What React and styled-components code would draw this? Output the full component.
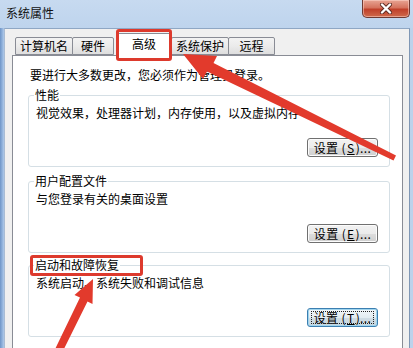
import React from "react";
import styled, { createGlobalStyle } from "styled-components";

const Global = createGlobalStyle`
  html, body { margin: 0; padding: 0; background: #c6d9ef; }
  body { font-family: "Noto Sans CJK SC", "Liberation Sans", sans-serif; font-size: 12px; color: #000; }
`;

const Window = styled.div`
  position: relative;
  width: 413px;
  height: 348px;
  overflow: hidden;
  display: flex;
  flex-direction: column;
  background: linear-gradient(90deg, #6f95c8 0px, #9dbce2 3px, #c4d8ef 5px, #c9dbef 70%, #bcd2eb 100%);
`;

const TitleBar = styled.div`
  height: 28px;
  flex: none;
  display: flex;
  align-items: flex-start;
  padding-left: 6px;
  padding-right: 3px;
  background: linear-gradient(180deg, #c7daf0 0%, #bed4ed 100%);
`;

const Title = styled.div`
  font-size: 12px;
  line-height: 16px;
  margin-top: 5px;
  color: #111;
`;

const CloseButton = styled.div`
  margin-left: auto;
  width: 46px;
  height: 17px;
  border: 1px solid #6e3a33;
  border-top: none;
  border-radius: 0 0 5px 5px;
  background: linear-gradient(180deg, #e8a594 0%, #d5735e 45%, #c0402a 55%, #cf6a4c 100%);
  display: flex;
  align-items: center;
  justify-content: center;
  box-shadow: inset 0 0 0 1px rgba(255, 220, 210, 0.5);
`;

const Client = styled.div`
  flex: 1;
  margin-left: 4px;
  margin-right: 3px;
  background: #f0f0f0;
  border-top: 1px solid #8fa7c4;
  border-left: 1px solid #a9bcd4;
  border-right: 1px solid #7f97b5;
  display: flex;
  flex-direction: column;
  padding: 4px 6px 0 7px;
`;

const TabRow = styled.div`
  display: flex;
  align-items: flex-end;
  height: 22px;
  padding-left: 3px;
  position: relative;
  z-index: 2;
`;

const Tab = styled.div`
  width: ${(p) => p.$w}px;
  margin-left: ${(p) => p.$ml || 0}px;
  height: ${(p) => (p.$active ? 23 : 18)}px;
  margin-bottom: ${(p) => (p.$active ? -1 : 0)}px;
  box-sizing: border-box;
  border: 1px solid #898c95;
  border-bottom: ${(p) => (p.$active ? "none" : "1px solid #898c95")};
  border-radius: 2px 2px 0 0;
  background: ${(p) =>
    p.$active ? "#ffffff" : "linear-gradient(180deg, #f3f3f3 0%, #ebebeb 50%, #dedede 100%)"};
  display: flex;
  justify-content: center;
  align-items: ${(p) => (p.$active ? "flex-start" : "center")};
  padding-top: ${(p) => (p.$active ? 2 : 0)}px;
  font-size: 12px;
  line-height: 16px;
  position: relative;
  z-index: ${(p) => (p.$active ? 3 : 1)};
`;

const Panel = styled.div`
  flex: 1;
  background: #fff;
  border: 1px solid #898c95;
  border-bottom: none;
  padding: 11px 12px 0 15px;
  display: flex;
  flex-direction: column;
`;

const Intro = styled.div`
  line-height: 16px;
  margin-left: 2px;
  margin-bottom: 4px;
`;

const Group = styled.fieldset`
  margin: 0 0 ${(p) => p.$mb || 0}px 0;
  padding: 0 11px 9px 5px;
  border: 1px solid #d5dfe5;
  border-radius: 3px;
  display: flex;
  flex-direction: column;
  min-width: 0;
`;

const Legend = styled.legend`
  padding: 0 1px;
  line-height: 16px;
  font-size: 12px;
`;

const Desc = styled.div`
  line-height: 16px;
  margin: 2px 0 0 2px;
`;

const Button = styled.div`
  align-self: flex-end;
  margin-top: 17px;
  width: 71px;
  height: 19px;
  box-sizing: border-box;
  border: 1px solid ${(p) => (p.$focus ? "#3c7fb1" : "#707070")};
  border-radius: 3px;
  background: ${(p) =>
    p.$focus
      ? "linear-gradient(180deg, #f2f7fa 0%, #e3ecf1 50%, #d0dde5 51%, #c6d5de 100%)"
      : "linear-gradient(180deg, #f2f2f2 0%, #ebebeb 50%, #dddddd 51%, #cfcfcf 100%)"};
  box-shadow: inset 0 0 0 1px ${(p) => (p.$focus ? "#9fd5ef" : "#fcfcfc")};
  display: flex;
  align-items: center;
  justify-content: center;
  position: relative;
  font-size: 12px;
  line-height: 14px;
  white-space: nowrap;
  letter-spacing: 0.4px;
  &::after {
    content: "";
    display: ${(p) => (p.$focus ? "block" : "none")};
    position: absolute;
    inset: 2px 3px;
    border: 1px dotted #222;
  }
`;

const Key = styled.span`
  text-decoration: underline;
  text-underline-offset: 1px;
  margin: 0 1px;
`;

const Highlight = styled.div`
  position: absolute;
  left: ${(p) => p.$x}px;
  top: ${(p) => p.$y}px;
  width: ${(p) => p.$w}px;
  height: ${(p) => p.$h}px;
  box-sizing: border-box;
  border: 3px solid #dd3a2d;
  border-radius: 3px;
  z-index: 10;
  pointer-events: none;
`;

const Overlay = styled.svg`
  position: absolute;
  left: 0;
  top: 0;
  z-index: 11;
  pointer-events: none;
`;

function SettingsButton({ k, focus }) {
  return (
    <Button $focus={focus}>
      设置 (<Key>{k}</Key>)...
    </Button>
  );
}

const tabs = [
  { label: "计算机名", w: 58 },
  { label: "硬件", w: 42, ml: -1 },
  { label: "高级", w: 54, ml: 3, active: true },
  { label: "系统保护", w: 58 },
  { label: "远程", w: 47, ml: -1 },
];

export default function App() {
  return (
    <>
      <Global />
      <Window>
        <TitleBar>
          <Title>系统属性</Title>
          <CloseButton>
            <svg width="14" height="11" viewBox="0 0 14 11">
              <path d="M3 1.5 L11 9.5 M11 1.5 L3 9.5" stroke="#5a2a22" strokeWidth="4" strokeLinecap="round" />
              <path d="M3 1.5 L11 9.5 M11 1.5 L3 9.5" stroke="#ffffff" strokeWidth="2.4" strokeLinecap="round" />
            </svg>
          </CloseButton>
        </TitleBar>
        <Client>
          <TabRow>
            {tabs.map((t) => (
              <Tab key={t.label} $w={t.w} $ml={t.ml} $active={t.active}>
                {t.label}
              </Tab>
            ))}
          </TabRow>
          <Panel>
            <Intro>要进行大多数更改，您必须作为管理员登录。</Intro>
            <Group $mb={6}>
              <Legend>性能</Legend>
              <Desc>视觉效果，处理器计划，内存使用，以及虚拟内存</Desc>
              <SettingsButton k="S" />
            </Group>
            <Group $mb={4}>
              <Legend>用户配置文件</Legend>
              <Desc>与您登录有关的桌面设置</Desc>
              <SettingsButton k="E" />
            </Group>
            <Group>
              <Legend>启动和故障恢复</Legend>
              <Desc>系统启动、系统失败和调试信息</Desc>
              <SettingsButton k="T" focus />
            </Group>
          </Panel>
        </Client>
        <Highlight $x={116} $y={29} $w={56} $h={32} />
        <Highlight $x={30} $y={255} $w={113} $h={21} />
        <Overlay width="413" height="348" viewBox="0 0 413 348">
          <polygon
            points="183,54 217,56 213.5,63 396,155.5 393.5,160.5 207,71.5 203,79"
            fill="#e23a2c"
          />
          <polygon
            points="93,279 92.5,304 87.5,301.5 59,359 52,355.5 80,297.5 74.5,295"
            fill="#e23a2c"
          />
        </Overlay>
      </Window>
    </>
  );
}
